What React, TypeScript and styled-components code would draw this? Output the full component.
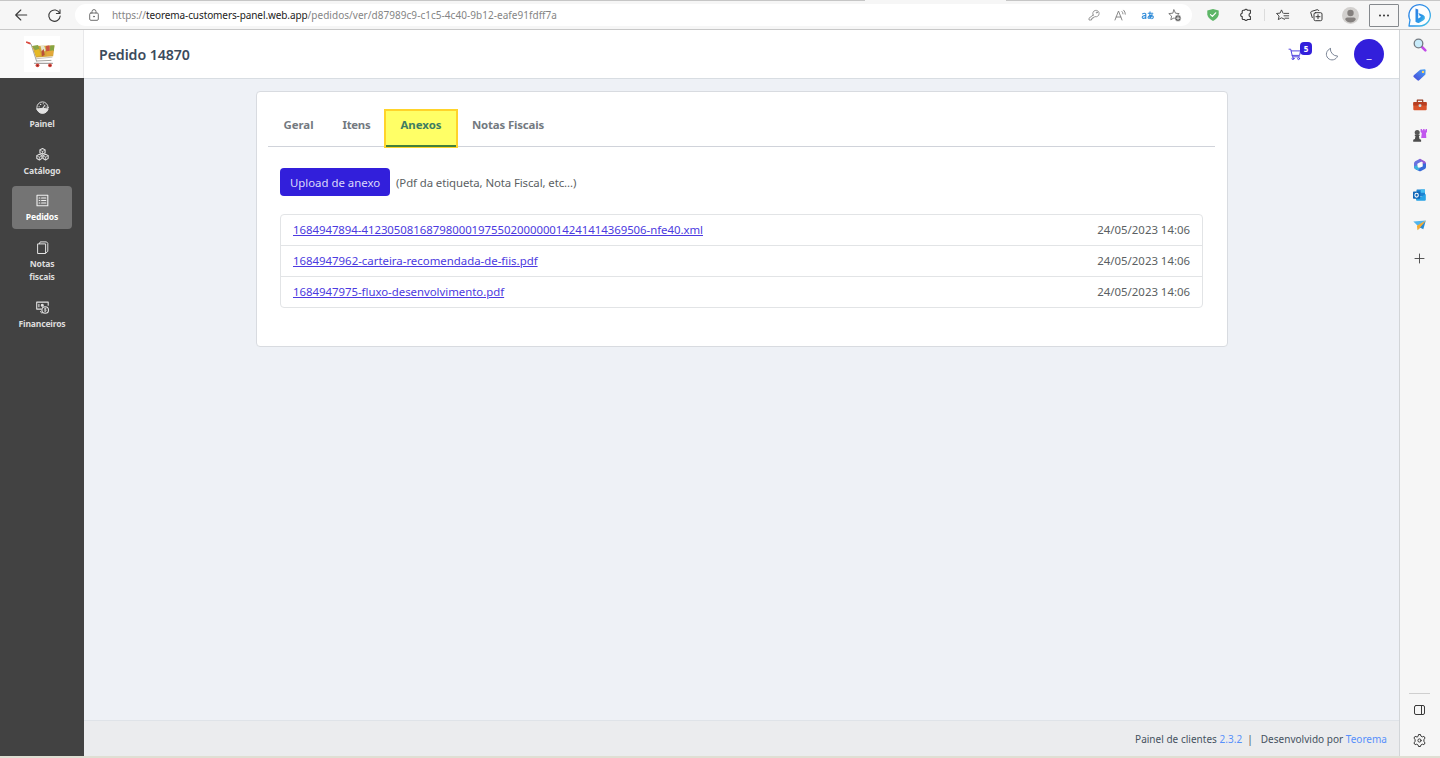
import React from "react";
import styled, { createGlobalStyle } from "styled-components";

const GlobalStyle = createGlobalStyle`
  *, *::before, *::after { box-sizing: border-box; }
  body {
    margin: 0;
    overflow: hidden;
    font-family: "Noto Sans", "Open Sans", sans-serif;
    font-size: 11.4px;
    color: #5b5f63;
  }
  svg { display: block; flex: none; overflow: visible; }
`;

/* ---------- browser frame ---------- */

const Window = styled.div`
  display: flex;
  flex-direction: column;
  width: 1440px;
  height: 758px;
  background: #f6f6f6;
  border-bottom: 2px solid #dfdfd3;
`;

const TopEdge = styled.div`
  display: flex;
  flex: none;
  height: 1px;
  padding-left: 865px;
  background: #c6c6c6;
`;

const ActiveTabEdge = styled.div`
  width: 141px;
  background: #f6f6f6;
`;

const Toolbar = styled.div`
  display: flex;
  flex: none;
  align-items: center;
  height: 29px;
  border-bottom: 1px solid #c8c8c8;
`;

const Slot = styled.div<{ $w: number }>`
  display: flex;
  flex: none;
  align-items: center;
  justify-content: center;
  width: ${(p) => p.$w}px;
`;

const AddressBar = styled.div`
  display: flex;
  align-items: center;
  width: 1117px;
  height: 22px;
  padding: 0 4px 0 5px;
  border-radius: 11px;
  background: #fff;
`;

const Url = styled.div`
  flex: 1;
  padding-left: 4px;
  font-size: 10px;
  letter-spacing: 0.04px;
  white-space: nowrap;
  color: #858585;
  span { letter-spacing: -0.07px; }
  b { font-weight: 400; color: #222; letter-spacing: -0.1px; }
`;

const ToolDivider = styled.div`
  width: 1px;
  height: 12px;
  background: #dcdcdc;
`;

const MenuButton = styled.div`
  display: flex;
  align-items: center;
  justify-content: center;
  width: 30px;
  height: 23px;
  margin-left: 7px;
  border: 1px solid #85898d;
  border-radius: 1px;
`;

const Body = styled.div`
  display: flex;
  flex: 1;
  min-height: 0;
`;

const EdgeBar = styled.div`
  display: flex;
  flex-direction: column;
  align-items: center;
  width: 41px;
  padding: 0 1px 1px 0;
  border-left: 1px solid #d2d5d8;
`;

const EdgeItem = styled.div`
  display: flex;
  flex: none;
  align-items: center;
  justify-content: center;
  height: 30px;
`;

const AddItem = styled(EdgeItem)`
  margin-top: 3px;
`;

const EdgeRule = styled.div`
  width: 21px;
  height: 1px;
  margin: auto 0 1px;
  background: #cfcfcf;
`;

/* ---------- application ---------- */

const Panel = styled.div`
  display: flex;
  flex-direction: column;
  width: 1399px;
  background: #eef1f6;
`;

const Header = styled.header`
  display: flex;
  flex: none;
  align-items: center;
  height: 48px;
  background: #fff;
`;

const Brand = styled.div`
  display: flex;
  align-items: center;
  justify-content: center;
  width: 84px;
  height: 48px;
  background: #f9f9f9;
  border-right: 1px solid #e8e8ea;
`;

const LogoTile = styled.div`
  display: flex;
  align-items: center;
  justify-content: center;
  width: 36px;
  height: 36px;
  padding-right: 2px;
  background: #fff;
`;

const HeaderMain = styled.div`
  display: flex;
  flex: 1;
  align-items: center;
  height: 49px;
  align-self: flex-start;
  padding: 0 15px;
  border-bottom: 1px solid #d8dde2;
  background: #fff;
`;

const Title = styled.h1`
  flex: 1;
  margin: 0;
  font-size: 14.2px;
  font-weight: 600;
  letter-spacing: -0.08px;
  color: #3c4b5c;
`;

const CartButton = styled.div`
  position: relative;
  margin-right: 25px;
`;

const CartBadge = styled.span`
  position: absolute;
  top: -6px;
  left: 11px;
  width: 12px;
  height: 13px;
  border-radius: 4px;
  background: #321fdb;
  color: #fff;
  font-size: 8px;
  font-weight: 700;
  line-height: 13px;
  text-align: center;
`;

const Avatar = styled.div`
  width: 30px;
  height: 30px;
  margin-left: 16px;
  border-radius: 50%;
  background: #321fdb;
  color: #fff;
  font-size: 11.4px;
  line-height: 29px;
  text-align: center;
`;

const Main = styled.div`
  display: flex;
  flex: 1;
  min-height: 0;
`;

const SideNav = styled.nav`
  display: flex;
  flex-direction: column;
  gap: 3px;
  width: 84px;
  padding: 15px 12px 0;
  background: #424242;
`;

const NavItem = styled.a<{ $active?: boolean }>`
  display: flex;
  flex-direction: column;
  align-items: center;
  padding: 8.4px 0 4.8px;
  border-radius: 4px;
  background: ${(p) => (p.$active ? "#747474" : "transparent")};
  color: ${(p) => (p.$active ? "#fff" : "#dcdcdc")};
  font-size: 8.6px;
  font-weight: 700;
  letter-spacing: -0.19px;
  line-height: 13.5px;
  text-align: center;
  white-space: pre;
  svg { margin: 0 0 3.8px; }
`;

const Page = styled.div`
  display: flex;
  flex: 1;
  flex-direction: column;
  padding-top: 13px;
`;

const Card = styled.section`
  width: 972px;
  height: 256px;
  margin-left: 172px;
  padding: 17px 12px 0 11px;
  border: 1px solid #d8dbe0;
  border-radius: 4px;
  background: #fff;
`;

const Tabs = styled.div`
  display: flex;
  height: 38px;
  border-bottom: 1px solid #d0d3da;
  margin-bottom: 21px;
`;

const Tab = styled.div<{ $w: number; $active?: boolean; $ls?: number }>`
  width: ${(p) => p.$w}px;
  height: ${(p) => (p.$active ? 39 : 37)}px;
  line-height: ${(p) => (p.$active ? 28 : 32)}px;
  font-size: 11.4px;
  font-weight: 700;
  letter-spacing: ${(p) => p.$ls ?? 0}px;
  text-align: center;
  white-space: nowrap;
  color: ${(p) => (p.$active ? "#3d7d62" : "#73797f")};
  ${(p) =>
    p.$active &&
    `
    border: 2px solid #ffd42a;
    border-bottom-width: 1px;
    background: linear-gradient(#ffff66 34px, #43803a 34px) padding-box;
  `}
`;

const UploadRow = styled.div`
  display: flex;
  align-items: center;
  padding-left: 12px;
  margin-bottom: 18px;
`;

const UploadButton = styled.div`
  width: 110px;
  height: 28px;
  margin-right: 6px;
  border-radius: 4px;
  background: #321fdb;
  color: #dcd9fa;
  line-height: 29px;
  text-align: center;
`;

const UploadHint = styled.span`
  letter-spacing: -0.09px;
`;

const FileList = styled.div`
  margin: 0 12px 0 12px;
  border: 1px solid #e2e4e6;
  border-radius: 4px;
`;

const FileRow = styled.div`
  display: flex;
  align-items: center;
  justify-content: space-between;
  height: 31px;
  padding: 0 12px 2px;
  & + & { border-top: 1px solid #e2e4e6; }
  &:first-child { height: 30px; }
`;

const FileLink = styled.a<{ $ls: number }>`
  color: #4c3ae0;
  text-decoration: underline;
  text-underline-offset: 1px;
  text-decoration-thickness: 1px;
  letter-spacing: ${(p) => p.$ls}px;
`;

const Footer = styled.footer`
  display: flex;
  align-items: center;
  justify-content: flex-end;
  height: 36px;
  margin-top: auto;
  padding-right: 12px;
  border-top: 1px solid #dfe3e8;
  background: #ebecee;
  color: #45525f;
  font-size: 10px;
  letter-spacing: 0.02px;
  white-space: pre;
  a { color: #5790fb; }
`;

/* ---------- icons ---------- */

type IconProps = { children: React.ReactNode; w?: number; h?: number; c?: string; sw?: number };

const Icon = ({ children, w = 14, h, c = "#3a3a3a", sw = 1 }: IconProps) => (
  <svg
    width={w}
    height={h ?? w}
    viewBox={`0 0 ${w} ${h ?? w}`}
    fill="none"
    stroke={c}
    strokeWidth={sw}
    strokeLinecap="round"
    strokeLinejoin="round"
  >
    {children}
  </svg>
);

const BackIcon = () => <Icon w={12} h={12} sw={1.1}><path d="M11.7 6H.7M5.8 1 .7 6l5.1 5" /></Icon>;
const ReloadIcon = () => <Icon w={13} sw={1.1}><path d="M11.7 4.3A5.7 5.7 0 1 0 12.2 7M12 .9v3.6H8.4" /></Icon>;
const LockIcon = () => (
  <Icon w={10} h={12} c="#6f6f6f">
    <rect x=".7" y="4" width="8.6" height="7.3" rx="1.2" />
    <path d="M3 4V2.6a2 2 0 0 1 4 0V4" />
    <circle cx="5" cy="7.6" r=".5" fill="#6f6f6f" />
  </Icon>
);
const KeyIcon = () => (
  <Icon w={12} c="#8c8c8c" sw={0.9}>
    <path d="M5.1 6.1A3.2 3.2 0 1 1 6.9 7.6l-.9.8H4.8v1.3H3.5V11H1V9.2l4.1-3.1Z" />
    <circle cx="8.8" cy="3.6" r=".5" />
  </Icon>
);
const ReadIcon = () => (
  <Icon w={13} h={12} c="#7d7d7d" sw={0.9}>
    <path d="M1 11 4.5 2 8 11M2.2 8h4.6M8 2.5q1 1 1 2.4M9.7 1.2q1.7 1.7 1.6 4" />
  </Icon>
);
const TranslateIcon = () => (
  <Icon w={14} h={9} c="#2d8ad8" sw={1.1}>
    <path d="M1.5 2.9q2.3-1.4 3.3.2v4.4M4.8 4.7C2.8 4.4 1.2 5 1.2 6.2c0 1.5 2.4 1.5 3.6 0M7.2 2.3h4.6M9 .9Q8.5 4 9.3 7.4M11 3.5C10.4 6 8.8 7.4 7.6 7.2 6.3 6.7 7.4 4.6 10 4.6c3 0 3 2.6.8 3" />
  </Icon>
);
const starPath = "M6 .9 7.5 4.2l3.7.4-2.8 2.5.8 3.6L6 8.9l-3.2 1.8.8-3.6L.8 4.6l3.7-.4Z";
const StarAddIcon = () => (
  <Icon w={13} h={12} c="#6e6e6e" sw={0.9}>
    <path d={starPath} />
    <circle cx="10" cy="9.2" r="3.1" fill="#555" stroke="#fff" strokeWidth=".5" />
    <path d="M8.5 9.2h3M10 7.7v3" stroke="#fff" strokeWidth=".8" />
  </Icon>
);
const ShieldIcon = () => (
  <Icon w={12} h={12} c="none">
    <path d="M6 0 11.7 1.5v4Q11.2 9.3 6 12 .8 9.3.3 5.5v-4Z" fill="#5db667" />
    <path d="m3.5 5.6 1.9 1.8 3.3-3.6" stroke="#fff" strokeWidth="1.2" />
  </Icon>
);
const PuzzleIcon = () => (
  <Icon w={12} h={12} sw={1.1}>
    <path d="M3.2 1.3h1.4q.4-1 1.4-1t1.4 1h3v2.9q-1.4.3-1.4 1.7t1.4 1.7v2.9h-3q-.4 1-1.4 1t-1.4-1H3.2q-1 0-1-1V7.6Q.6 7.3.6 5.9t1.6-1.7V2.3q0-1 1-1Z" />
  </Icon>
);
const FavoritesIcon = () => (
  <Icon w={13} h={12} sw={0.9}>
    <path d="M8.6 10.3 5.5 8.8l-3.2 1.8.8-3.6L.5 4.5l3.6-.4L5.5.9 7 4.1M8 4.4h4.7M8 6.8h4.7M9 9.2h3.7" />
  </Icon>
);
const CollectionsIcon = () => (
  <Icon w={13} h={12} sw={1}>
    <rect x="4" y="3.7" width="8" height="8" rx="1.4" />
    <path d="M8 5.7v4M6 7.7h4M2.3 8.6.8 3.8Q.5 2.7 1.5 2.4L7.2.7q1-.2 1.6.9" />
  </Icon>
);
const ProfileIcon = () => (
  <Icon w={17} c="none">
    <circle cx="8.5" cy="8.5" r="8.5" fill="#d2d0ce" />
    <circle cx="8.5" cy="6" r="3.2" fill="#84807e" />
    <path d="M3.2 12.5q0-2 2-2h6.6q2 0 2 2-1.8 3-5.3 3t-5.3-3Z" fill="#84807e" />
  </Icon>
);
const DotsIcon = () => (
  <Icon w={12} h={3} c="none">
    {[2, 6, 10].map((x) => <circle key={x} cx={x} cy="1.5" r="1" fill="#333" />)}
  </Icon>
);
const BingIcon = () => (
  <Icon w={23} h={23} c="none">
    <defs>
      <linearGradient id="bing" x1="0" y1="0" x2="1" y2="1">
        <stop offset="0" stopColor="#2f7fe4" />
        <stop offset=".6" stopColor="#2b97e8" />
        <stop offset="1" stopColor="#4dcbe5" />
      </linearGradient>
    </defs>
    <path d="M1 22 2 16A10.7 10.7 0 1 1 11.6 22Z" fill="#fcfeff" stroke="url(#bing)" strokeWidth="1.3" />
    <path d="m7.5 4.5 2.7 1v9.1l3-1.8-1.5-.8-1.2-3 4.7 1.9q2.3 1.2 1.7 3.6-.3 1-1.7 1.9l-3.9 2.3q-1.3.6-2.5-.1l-1.3-.9Z" fill="url(#bing)" />
  </Icon>
);

const SearchColorIcon = () => (
  <Icon w={14} c="none">
    <path d="m9 9 3.4 3.4" stroke="#c24be8" strokeWidth="2.5" />
    <circle cx="5.5" cy="5.5" r="4.3" fill="#c8ebfa" stroke="#747b82" strokeWidth="1.3" />
  </Icon>
);
const TagIcon = () => (
  <Icon w={13} h={12} c="none">
    <defs>
      <linearGradient id="tag" x1="1" y1="0" x2="0" y2="1">
        <stop offset="0" stopColor="#4ba4f5" />
        <stop offset="1" stopColor="#4546d8" />
      </linearGradient>
    </defs>
    <path d="M7.2.7 11.6.2q1 0 1 1l-.2 4.3-6.2 5.8q-.9.7-1.8-.1L.7 8q-.8-.9.1-1.8Z" fill="url(#tag)" />
    <circle cx="10" cy="2.9" r="1.2" fill="#ffd35a" />
  </Icon>
);
const ToolboxIcon = () => (
  <Icon w={14} h={12} c="none">
    <path d="M4.3 3V1.2h5.4V3" stroke="#953b23" strokeWidth="1.2" />
    <rect x=".3" y="3" width="13.4" height="8.3" rx="1" fill="#d9532b" />
    <path d="M.3 4q0-1 1-1h11.4q1 0 1 1v2.6H.3Z" fill="#b63e21" />
    <rect x="5.6" y="5.3" width="2.8" height="2.6" rx=".8" fill="#c7dbe2" />
  </Icon>
);
const ChessIcon = () => (
  <Icon w={14} h={13} c="none">
    <path d="M7.6 0h1.5v1.2h1V0h1.5v1.2h1V0H14v3l-1 1 .3 4.9H8.2L8.8 4 7.6 3Z" fill="#c158ee" />
    <circle cx="4.2" cy="3.6" r="2.5" fill="#555" />
    <path d="M1.8 5.8h4.8v1.2H5.9l.6 3 1.6.8v2H.2v-2l1.7-.8L2.5 7h-.7Z" fill="#4d4d4d" />
  </Icon>
);
const M365Icon = () => (
  <Icon w={14} h={14} c="none">
    <path d="M7 .7 2.2 3.3Q1 4 1 5.4v3.5q0 1.3 1.2 2l2.2 1.2V5.8L9.5 3Z" fill="#6973df" />
    <path d="m7 .7 4.8 2.6Q13 4 13 5.4v2.5L9.7 6V4.2L6 2Z" fill="#965bd4" />
    <path d="M13 5.4v3.5q0 1.3-1.2 2L8 13q-1 .5-2 0L2.4 11 9.7 8.6V5.8Z" fill="#386bd8" />
    <path d="M1 8.5 4.4 7v2l2.5 1.4-2 2.1-2.7-1.6Q1 10.2 1 8.5Z" fill="#3cb3dd" />
    <path d="m7 4.7 2.2 1.2v2.4L7 9.6 4.8 8.3V5.9Z" fill="#fff" />
  </Icon>
);
const OutlookIcon = () => (
  <Icon w={13} h={12} c="none">
    <rect x="3.5" y=".4" width="8.5" height="7" rx=".6" fill="#1d83d1" />
    <path d="M7.7.4H12v3.4H7.7Z" fill="#45bdf0" />
    <path d="M3 5.5 7.8 8 12.8 5v5.8q0 .9-1 .9H4q-1 0-1-1Z" fill="#28a3e5" />
    <rect x="0" y="2.6" width="7.2" height="7.2" rx=".7" fill="#0f66b7" />
    <ellipse cx="3.6" cy="6.2" rx="1.7" ry="1.9" stroke="#fff" strokeWidth="1.1" />
  </Icon>
);
const PlaneIcon = () => (
  <Icon w={13} h={11} c="none">
    <path d="M.3 1.5 12.8.5 5 6Z" fill="#51b5ed" />
    <path d="M12.8.5 10.3 9.3 6.8 7.6Z" fill="#268bd4" />
    <path d="M12.8.5 3.9 5.7l.6 4.5Z" fill="#f5ab2e" />
    <path d="m12.8.5-8.3 9.7 2.7-2.5Z" fill="#cf7d17" />
  </Icon>
);
const PlusIcon = () => <Icon w={9} h={9} c="#444" sw={0.9}><path d="M4.5 0v9M0 4.5h9" /></Icon>;
const SplitIcon = () => (
  <Icon w={11} h={10} sw={1}>
    <rect x=".5" y=".5" width="10" height="9" rx="1.5" />
    <path d="M7.5.5v9" />
  </Icon>
);
const GearIcon = () => (
  <Icon w={13} h={13} sw={1}>
    <path d="M5.2 2 5.5.5h2L7.8 2l1.5.9 1.6-.6 1.2 1.9-1.2 1.1v2.4l1.2 1.1-1.2 1.9-1.6-.5-1.5.9-.3 1.4h-2l-.3-1.4-1.5-.9-1.6.5L.9 8.8l1.2-1.1V5.3L.9 4.2l1.2-1.9 1.6.6Z" />
    <circle cx="6.5" cy="6.5" r="1.6" />
  </Icon>
);

const LogoCart = () => (
  <Icon w={30} h={28} c="none">
    <path d="M2 2.8 5 4l5.5 17M10.5 21 25 20.4" stroke="#9b9a94" strokeWidth=".9" />
    <path d="m.8 2.2 3 1.2" stroke="#dc4b41" strokeWidth="1.7" />
    <path d="M6 6 28.5 5.4l-1.3 10.8-17.2 1.4Z" fill="#d3a53c" />
    <path d="M6 6 12 5l1.6 4.2-3 3Z" fill="#8aa446" />
    <path d="m8.3 10.5 4.5-1.5 2.3 6.2-5 1.4Z" fill="#e5b925" />
    <path d="m14.5 6 3.5-.8 1.7 5-3.5 2.9Z" fill="#e3e4cf" />
    <path d="m15.5 11.3 2.2-2.3 1 6-2.8 1.4Z" fill="#b9503a" />
    <path d="m20 6 3.5-.8.2 5.5-3.5 1Z" fill="#c95446" />
    <path d="m24.2 5.5 4.2-.3-.6 5.5-3.8 1Z" fill="#86a544" />
    <path d="m20.3 11.5 7-1.2-.5 4.8-6 .9Z" fill="#e3a83a" />
    <path d="M10.5 18.7 26 17.2" stroke="#b9b4ac" strokeWidth=".8" />
    <path d="M8.5 23.3h18" stroke="#a5a3a2" strokeWidth="1.2" />
    {[11.5, 24].map((x) => (
      <g key={x}>
        <circle cx={x} cy="25.3" r="1.9" fill="#d9483e" />
        <circle cx={x} cy="25.5" r=".8" fill="#7d2924" />
      </g>
    ))}
  </Icon>
);

const CartIcon = () => (
  <Icon w={12} h={12} c="#4433dd" sw={0.9}>
    <path d="M0 1.2h1.7l1.8 7.6h6.9M2.3 2.9h9.2l-.9 4.5H3.2" />
    <circle cx="4" cy="10.6" r="1" />
    <circle cx="9.6" cy="10.6" r="1" />
  </Icon>
);
const MoonIcon = () => (
  <Icon w={12} h={12} c="#768192" sw={0.95}>
    <path d="M4.3.6A7 7 0 0 0 11.6 8 5.8 5.8 0 1 1 4.3.6Z" />
  </Icon>
);

const light = "#e2e2e2";
const PanelIcon = () => (
  <Icon w={13} h={13} c={light} sw={1}>
    <circle cx="6.5" cy="6.5" r="5.6" />
    <path d="M1 8q5.5-1.4 11 0-1 4.2-5.5 4.2T1 8Z" fill={light} />
    <path d="m6.3 8 2.6-3.8M3 5.7h.3M4.5 3.4h.3M7.2 2.8h.2M10 6h.2" strokeWidth="1.1" />
  </Icon>
);
const CatalogIcon = () => (
  <Icon w={13} h={13} c={light} sw={1.05}>
    {[[6.5, 3.4], [3.4, 9.1], [9.6, 9.1]].map(([x, y]) => (
      <g key={x}>
        <path d={`M${x} ${y - 2.9}l2.6 1.4v2.8L${x} ${y + 2.9}l-2.6-1.5v-2.9Z`} />
        <path d={`M${x - 2.4} ${y - 1.2}l2.4 1.3 2.4-1.3M${x} ${y}v2.5`} strokeWidth=".7" />
      </g>
    ))}
  </Icon>
);
const OrdersIcon = () => (
  <Icon w={13} h={13} c="#f0f0f0" sw={1.1}>
    <rect x="1" y="1.2" width="10.8" height="10.6" />
    <path d="M3.2 4h.6M5.6 4h4.2M3.2 6.5h.6M5.6 6.5h4.2M3.2 9h.6M5.6 9h4.2" />
  </Icon>
);
const InvoicesIcon = () => (
  <Icon w={13} h={13} c={light} sw={1}>
    <path d="M2 2.9h7.6v9.6H2ZM3.4 2.7 4.2.9h6.4l1.2 1.5v8L9.8 12" />
  </Icon>
);
const FinanceIcon = () => (
  <Icon w={13} h={13} c={light} sw={1.1}>
    <path d="M5.1 8.1H.7v-7h11.5v3.2M2.9 3.3v2.4" />
    <circle cx="6.3" cy="4.3" r="1" fill={light} />
    <circle cx="9.2" cy="9" r="3.3" />
    <path d="M10.1 7.7q-1.8-.7-1.8.2c0 .9 1.9.6 1.9 1.6 0 .9-1.3.9-2 .4M9.2 6.9v4" strokeWidth=".7" />
    <path d="M4.4 10.4q.2 1.4 1.4 1.8" strokeWidth=".8" />
  </Icon>
);

const navItems = [
  { label: "Painel", icon: <PanelIcon /> },
  { label: "Catálogo", icon: <CatalogIcon /> },
  { label: "Pedidos", icon: <OrdersIcon />, active: true },
  { label: "Notas\nfiscais", icon: <InvoicesIcon /> },
  { label: "Financeiros", icon: <FinanceIcon /> },
];

const files = [
  { name: "1684947894-41230508168798000197550200000014241414369506-nfe40.xml", date: "24/05/2023 14:06", ls: -0.035 },
  { name: "1684947962-carteira-recomendada-de-fiis.pdf", date: "24/05/2023 14:06", ls: 0 },
  { name: "1684947975-fluxo-desenvolvimento.pdf", date: "24/05/2023 14:06", ls: -0.02 },
];

const edgeApps = [SearchColorIcon, TagIcon, ToolboxIcon, ChessIcon, M365Icon, OutlookIcon, PlaneIcon];

export default function App() {
  return (
    <Window>
      <GlobalStyle />
      <TopEdge><ActiveTabEdge /></TopEdge>
      <Toolbar>
        <Slot $w={41}><BackIcon /></Slot>
        <Slot $w={26}><ReloadIcon /></Slot>
        <Slot $w={8} />
        <AddressBar>
          <Slot $w={28}><LockIcon /></Slot>
          <Url><span>https://</span><b>teorema-customers-panel.web.app</b>/pedidos/ver/d87989c9-c1c5-4c40-9b12-eafe91fdff7a</Url>
          <Slot $w={27}><KeyIcon /></Slot>
          <Slot $w={27}><ReadIcon /></Slot>
          <Slot $w={27}><TranslateIcon /></Slot>
          <Slot $w={27}><StarAddIcon /></Slot>
        </AddressBar>
        <Slot $w={42}><ShieldIcon /></Slot>
        <Slot $w={24}><PuzzleIcon /></Slot>
        <Slot $w={12}><ToolDivider /></Slot>
        <Slot $w={24}><FavoritesIcon /></Slot>
        <Slot $w={44}><CollectionsIcon /></Slot>
        <Slot $w={24}><ProfileIcon /></Slot>
        <MenuButton><DotsIcon /></MenuButton>
        <Slot $w={41}><BingIcon /></Slot>
      </Toolbar>
      <Body>
        <Panel>
          <Header>
            <Brand><LogoTile><LogoCart /></LogoTile></Brand>
            <HeaderMain>
              <Title>Pedido 14870</Title>
              <CartButton><CartIcon /><CartBadge>5</CartBadge></CartButton>
              <MoonIcon />
              <Avatar>_</Avatar>
            </HeaderMain>
          </Header>
          <Main>
            <SideNav>
              {navItems.map((n) => (
                <NavItem key={n.label} $active={n.active}>{n.icon}{n.label}</NavItem>
              ))}
            </SideNav>
            <Page>
              <Card>
                <Tabs>
                  <Tab $w={61}>Geral</Tab>
                  <Tab $w={55} $ls={-0.3}>Itens</Tab>
                  <Tab $w={74} $active>Anexos</Tab>
                  <Tab $w={100} $ls={-0.14}>Notas Fiscais</Tab>
                </Tabs>
                <UploadRow>
                  <UploadButton>Upload de anexo</UploadButton>
                  <UploadHint>(Pdf da etiqueta, Nota Fiscal, etc...)</UploadHint>
                </UploadRow>
                <FileList>
                  {files.map((f) => (
                    <FileRow key={f.name}>
                      <FileLink $ls={f.ls}>{f.name}</FileLink>
                      <span>{f.date}</span>
                    </FileRow>
                  ))}
                </FileList>
              </Card>
              <Footer>
                Painel de clientes <a>2.3.2</a>{"  |   "}Desenvolvido por <a>Teorema</a>
              </Footer>
            </Page>
          </Main>
        </Panel>
        <EdgeBar>
          {edgeApps.map((A, i) => <EdgeItem key={i}><A /></EdgeItem>)}
          <AddItem><PlusIcon /></AddItem>
          <EdgeRule />
          <EdgeItem><SplitIcon /></EdgeItem>
          <EdgeItem><GearIcon /></EdgeItem>
        </EdgeBar>
      </Body>
    </Window>
  );
}
